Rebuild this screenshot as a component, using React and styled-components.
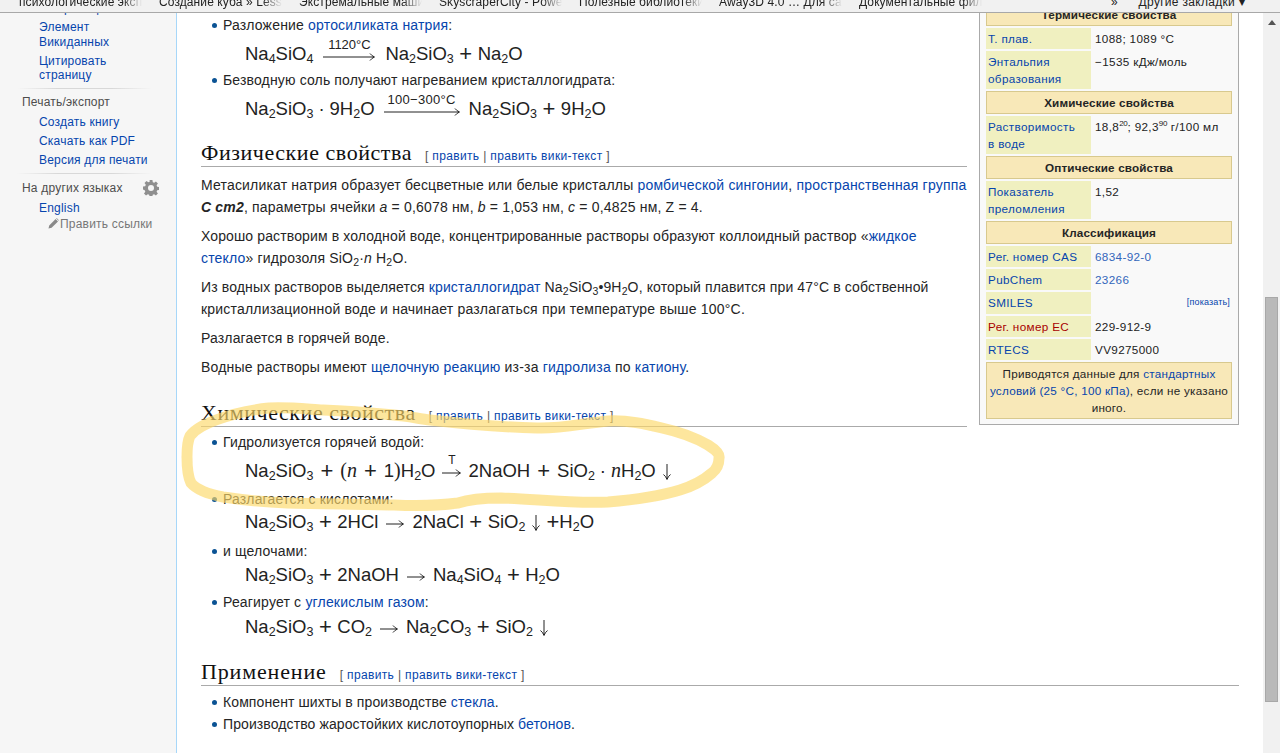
import React from 'react';
import styled, { createGlobalStyle } from 'styled-components';

const Global = createGlobalStyle`
  html, body { margin: 0; height: 100%; overflow: hidden; background: #fff; }
  #root { height: 100%; }
  * { box-sizing: border-box; }
  a { text-decoration: none; }
`;
const Page = styled.div`
  width: 1280px; height: 753px; position: relative; overflow: hidden; display: flex; flex-direction: column;
  font-family: "Liberation Sans", Arial, sans-serif; color: #252525;
`;
const BookmarkBar = styled.div`
  height: 13px; flex: none; background: #f1f1f1; border-bottom: 1px solid #a8a8a8; overflow: hidden;
  display: flex; align-items: flex-end; padding-left: 19px; font-size: 12px; letter-spacing: .1px; color: #222;
  position: relative; line-height: 12px;
`;
const Bookmark = styled.div`
  width: 140px; flex: none; white-space: nowrap; overflow: hidden; padding: 0 16px 4px 0; height: 20px; display: flex; align-items: flex-end;
  -webkit-mask-image: linear-gradient(90deg, #000 74%, transparent 88%);
  mask-image: linear-gradient(90deg, #000 74%, transparent 88%);
`;
const OtherBookmarks = styled.div` position: absolute; right: 35px; bottom: 4px; white-space: nowrap; letter-spacing: .3px; `;
const Chevron = styled.span` position: absolute; left: 1111px; bottom: 4px; font-size: 12px; `;
const Body = styled.div` flex: 1; display: flex; min-height: 0; `;
const Sidebar = styled.nav`
  width: 177px; flex: none; background: #f6f6f6; border-right: 1px solid #a7d7f9; overflow: hidden; font-size: 12px; line-height: 14.5px;
  letter-spacing: .2px;
`;
const NavInner = styled.div` margin-top: -12px; padding-left: 22px; `;
const NavList = styled.div` padding-left: 17px; display: flex; flex-direction: column; gap: 4.5px; `;
const NavLink = styled.a` color: #0645ad; display: block; `;
const Divider = styled.div`
  height: 1px; width: 135px; margin: ${p => p.$top}px 0 6px -5px;
  background: linear-gradient(90deg, #f6f6f6, #d8d8d8 30%, #d8d8d8 70%, #f6f6f6);
`;
const NavHead = styled.div`
  color: #4d4d4d; display: flex; align-items: center; justify-content: space-between; width: 137px; margin-bottom: ${p => p.$mb}px; height: 16px;
`;
const EditLinks = styled.div` color: #777; display: flex; align-items: center; gap: 1px; margin: 1px 0 0 26px; white-space: nowrap; `;
const Main = styled.main`
  flex: 1; min-width: 0; overflow: hidden; font-size: 14px; line-height: 22px; letter-spacing: .18px; padding: 0 24px; position: relative;
  a { color: #0645ad; }
`;
const Infobox = styled.aside`
  float: right; width: 260px; margin: -11px 0 12px 12px; border: 1px solid #aaa; background: #f9f9f9; padding: 0 6px 5px 6px;
  font-size: 11.7px; line-height: 17px; letter-spacing: .35px; display: flex; flex-direction: column; gap: 2px;
`;
const BoxHead = styled.div`
  background: #f8e8b8; border: 1px solid #d8c98e; height: 23px; display: flex; align-items: center; justify-content: center;
  font-weight: 700; color: #252525; text-align: center; letter-spacing: .15px;
`;
const BoxRow = styled.div` display: flex; min-height: ${p => p.$h || 21}px; `;
const BoxKey = styled.div`
  width: 105px; flex: none; background: #f0f0c0; padding: 2px 2px 2px; color: ${p => p.$red ? '#a80000' : '#0645ad'}; line-height: 17px;
`;
const BoxVal = styled.div`
  flex: 1; padding: 2px 4px; color: #222; line-height: 17px; position: relative;
  a { color: #3366bb; }
  sup { font-size: 8px; line-height: 0; letter-spacing: -.3px; }
`;
const Show = styled.a`
  && { color: #0645ad; } position: absolute; right: 2px; top: 2px; font-size: 9px; letter-spacing: .15px;
`;
const BoxNote = styled.div`
  background: #f8e8b8; border: 1px solid #d8c98e; text-align: center; padding: 2px 0; letter-spacing: .25px; white-space: nowrap;
`;
const Bullets = styled.ul` list-style: none; margin: 0; padding: 0 0 0 22px; `;
const Bullet = styled.li`
  position: relative; height: 22px; margin-top: ${p => p.$mt ?? 0}px; letter-spacing: ${p => p.$ls ?? .18}px;
  &::before { content: ''; position: absolute; left: -11px; top: 9px; width: 5px; height: 5px; border-radius: 50%; background: #0b5394; }
`;
const FormulaLine = styled.div`
  margin-left: 44px; font-size: 18.5px; letter-spacing: 0; white-space: nowrap; color: #222;
  height: ${p => p.$h}px; line-height: ${p => p.$h - (p.$pt || 0) - (p.$pb || 0)}px; padding-top: ${p => p.$pt || 0}px;
  sub { font-size: 12.5px; line-height: 0; vertical-align: -3px; }
`;
const MathItalic = styled.span` font-family: "Liberation Serif", serif; font-style: italic; font-size: 20px; `;
const Paren = styled.span` font-family: "Liberation Serif", serif; font-size: 20px; `;
const Op = styled.span` margin: 0 ${p => p.$m ?? 7}px; `;
const Plus = styled.span` font-size: 22px; line-height: 0; margin: 0 ${p => p.$m ?? 5.5}px; vertical-align: -1px; `;
const Arrow = styled.span`
  display: inline-block; position: relative; width: ${p => p.$w}px; height: 10px; margin: 0 ${p => p.$m ?? 8}px; vertical-align: ${p => p.$va ?? -1}px;
  svg { display: block; }
`;
const ArrowLabel = styled.span`
  position: absolute; bottom: ${p => p.$b ?? 10}px; left: -10px; right: -10px; text-align: center; font-size: ${p => p.$fs ?? 13}px; letter-spacing: ${p => p.$ls ?? 0}px; line-height: 15px; white-space: nowrap;
`;
const DownArrow = styled.svg` margin: 0 ${p => p.$mr ?? 0}px 0 6px; vertical-align: -3px; `;
const H2 = styled.h2`
  font-family: "Liberation Serif", serif; font-weight: 400; font-size: 22px; line-height: 27px; letter-spacing: ${p => p.$ls ?? .55}px; margin: ${p => p.$mt}px 0 ${p => p.$mb}px; color: #111;
  border-bottom: 1px solid #aaa; white-space: nowrap; overflow: hidden; height: 28px;
`;
const EditSection = styled.span`
  font-family: "Liberation Sans", sans-serif; font-size: 12px; letter-spacing: .35px; color: #555; margin-left: 13px;
`;
const P = styled.p`
  margin: 0 0 7px; white-space: nowrap;
  sub { font-size: 10.5px; line-height: 0; vertical-align: -3px; }
`;
const Line = styled.span` display: block; letter-spacing: ${p => p.$ls}px; `;
const Ring = styled.svg` position: absolute; left: 0; top: 0; width: 1280px; height: 753px; pointer-events: none; opacity: .65; `;
const Scrollbar = styled.div` width: 17px; flex: none; background: #f1f1f1; position: relative; `;
const Thumb = styled.div` position: absolute; left: 2px; right: 2px; top: 284px; height: 405px; background: #b9b9b9; border: 1px solid #a8a8a8; `;
const ScrollUp = styled.div`
  position: absolute; left: 4.5px; top: 7px; width: 0; height: 0; border-left: 4px solid transparent; border-right: 4px solid transparent; border-bottom: 5px solid #555;
`;

const Gear = () => (
  <svg width="16" height="16" viewBox="0 0 16 16" fill="#8f8f8f"><path fillRule="evenodd" d="M6.6 0h2.8l.4 2.2 1.4.6L12.9 1.5l2 2-1.3 1.8.6 1.4 2.2.4v2.8l-2.2.4-.6 1.4 1.3 1.8-2 2-1.8-1.3-1.4.6-.4 2.2H6.6l-.4-2.2-1.4-.6-1.8 1.3-2-2 1.3-1.8-.6-1.4L0 9.4V6.6l2.2-.4.6-1.4L1.5 3l2-2 1.8 1.3 1.4-.6zM8 5a3 3 0 100 6 3 3 0 000-6z" /></svg>
);
const Pencil = () => (
  <svg width="11" height="11" viewBox="0 0 11 11" fill="#8a8a8a"><path d="M0.5 10.5l.7-3L7.6 1l2.4 2.4L3.6 9.8zM8.2.4l.5-.3 2.2 2.2-.3.5z" /></svg>
);
const LongArrow = ({ w }) => (
  <svg width={w} height="10" viewBox={`0 0 ${w} 10`} fill="none" stroke="#222" strokeWidth="1">
    <path d={`M0 5H${w - 1}M${w - 5} 1.5Q${w - 3} 4 ${w - 0.5} 5Q${w - 3} 6 ${w - 5} 8.5`} />
  </svg>
);
const Down = ({ mr }) => (
  <DownArrow $mr={mr} width="10" height="16" viewBox="0 0 10 16" fill="none" stroke="#222" strokeWidth="1">
    <path d="M5 0V15M1.5 10.5Q4 12.5 5 15.5Q6 12.5 8.5 10.5" />
  </DownArrow>
);
const Silicate = ({ a = 2, b = 3 }) => <>Na<sub>{a}</sub>SiO<sub>{b}</sub></>;
const Edit = () => <EditSection>[ <a>править</a> | <a>править вики-текст</a> ]</EditSection>;

export default function App() {
  return (
    <Page>
      <Global />
      <BookmarkBar>
        <Bookmark>психологические экспертизы</Bookmark>
        <Bookmark>Создание куба » Lessons</Bookmark>
        <Bookmark>Экстремальные машины</Bookmark>
        <Bookmark>SkyscraperCity - Power</Bookmark>
        <Bookmark>Полезные библиотеки</Bookmark>
        <Bookmark>Away3D 4.0 … Для сайта</Bookmark>
        <Bookmark>Документальные фильмы</Bookmark>
        <Chevron>»</Chevron>
        <OtherBookmarks>Другие закладки ▾</OtherBookmarks>
      </BookmarkBar>
      <Body>
        <Sidebar>
          <NavInner>
            <NavList>
              <NavLink>О странице</NavLink>
              <NavLink>Элемент<br />Викиданных</NavLink>
              <NavLink>Цитировать<br />страницу</NavLink>
            </NavList>
            <Divider $top={5} />
            <NavHead $mb={4}>Печать/экспорт</NavHead>
            <NavList>
              <NavLink>Создать книгу</NavLink>
              <NavLink>Скачать как PDF</NavLink>
              <NavLink>Версия для печати</NavLink>
            </NavList>
            <Divider $top={6} />
            <NavHead $mb={5}>На других языках <Gear /></NavHead>
            <NavList>
              <NavLink>English</NavLink>
            </NavList>
            <EditLinks><Pencil />Править ссылки</EditLinks>
          </NavInner>
        </Sidebar>
        <Main>
          <Infobox>
            <BoxHead>Термические свойства</BoxHead>
            <BoxRow><BoxKey>Т. плав.</BoxKey><BoxVal>1088; 1089 °C</BoxVal></BoxRow>
            <BoxRow><BoxKey>Энтальпия образования</BoxKey><BoxVal>−1535 кДж/моль</BoxVal></BoxRow>
            <BoxHead>Химические свойства</BoxHead>
            <BoxRow><BoxKey>Растворимость<br />в воде</BoxKey><BoxVal>18,8<sup>20</sup>; 92,3<sup>90</sup> г/100 мл</BoxVal></BoxRow>
            <BoxHead>Оптические свойства</BoxHead>
            <BoxRow><BoxKey>Показатель преломления</BoxKey><BoxVal>1,52</BoxVal></BoxRow>
            <BoxHead>Классификация</BoxHead>
            <BoxRow><BoxKey>Рег. номер CAS</BoxKey><BoxVal><a>6834-92-0</a></BoxVal></BoxRow>
            <BoxRow><BoxKey>PubChem</BoxKey><BoxVal><a>23266</a></BoxVal></BoxRow>
            <BoxRow $h={22}><BoxKey>SMILES</BoxKey><BoxVal><Show>[показать]</Show></BoxVal></BoxRow>
            <BoxRow><BoxKey $red>Рег. номер EC</BoxKey><BoxVal>229-912-9</BoxVal></BoxRow>
            <BoxRow><BoxKey>RTECS</BoxKey><BoxVal>VV9275000</BoxVal></BoxRow>
            <BoxNote>Приводятся данные для <a>стандартных</a><br /><a>условий (25 °C, 100 кПа)</a>, если не указано<br />иного.</BoxNote>
          </Infobox>

          <Bullets>
            <Bullet $mt={1}>Разложение <a>ортосиликата натрия</a>:</Bullet>
          </Bullets>
          <FormulaLine $h={33} $pt={3}>
            <Silicate a={4} b={4} />
            <Arrow $w={52} $m={10} $va={-2}><ArrowLabel>1120°C</ArrowLabel><LongArrow w={52} /></Arrow>
            <Silicate /><Plus>+</Plus>Na<sub>2</sub>O
          </FormulaLine>
          <Bullets>
            <Bullet $ls={.15}>Безводную соль получают нагреванием кристаллогидрата:</Bullet>
          </Bullets>
          <FormulaLine $h={34} $pt={2}>
            <Silicate /><Op $m={5}>·</Op>9H<sub>2</sub>O
            <Arrow $w={76} $m={9} $va={-2}><ArrowLabel $ls={.3}>100−300°C</ArrowLabel><LongArrow w={76} /></Arrow>
            <Silicate /><Plus>+</Plus>9H<sub>2</sub>O
          </FormulaLine>

          <H2 $mt={14} $mb={7}>Физические свойства<Edit /></H2>
          <P>Метасиликат натрия образует бесцветные или белые кристаллы <a>ромбической сингонии</a>, <a>пространственная группа</a><br /><b><i>C cm2</i></b>, параметры ячейки <i>a</i> = 0,6078 нм, <i>b</i> = 1,053 нм, <i>c</i> = 0,4825 нм, Z = 4.</P>
          <P><Line $ls={.12}>Хорошо растворим в холодной воде, концентрированные растворы образуют коллоидный раствор «<a>жидкое</a></Line><a>стекло</a>» гидрозоля SiO<sub>2</sub>·<i>n</i> H<sub>2</sub>O.</P>
          <P><Line $ls={.13}>Из водных растворов выделяется <a>кристаллогидрат</a> Na<sub>2</sub>SiO<sub>3</sub>•9H<sub>2</sub>O, который плавится при 47°C в собственной</Line><Line $ls={.2}>кристаллизационной воде и начинает разлагаться при температуре выше 100°C.</Line></P>
          <P>Разлагается в горячей воде.</P>
          <P>Водные растворы имеют <a>щелочную реакцию</a> из-за <a>гидролиза</a> по <a>катиону</a>.</P>

          <H2 $mt={21} $mb={4}>Химические свойства<Edit /></H2>
          <Bullets>
            <Bullet>Гидролизуется горячей водой:</Bullet>
          </Bullets>
          <FormulaLine $h={35}>
            <Silicate /><Plus $m={7}>+</Plus><Paren>(</Paren><MathItalic>n</MathItalic><Plus $m={7}>+</Plus>1<Paren>)</Paren>H<sub>2</sub>O
            <Arrow $w={19} $m={7}><ArrowLabel $fs={12}>T</ArrowLabel><LongArrow w={19} /></Arrow>
            2NaOH<Plus $m={7}>+</Plus>SiO<sub>2</sub><Op $m={5}>·</Op><MathItalic>n</MathItalic>H<sub>2</sub>O<Down />
          </FormulaLine>
          <Bullets>
            <Bullet>Разлагается с кислотами:</Bullet>
          </Bullets>
          <FormulaLine $h={30} $pb={6}>
            <Silicate /><Plus>+</Plus>2HCl
            <Arrow $w={18}><LongArrow w={18} /></Arrow>
            2NaCl<Plus>+</Plus>SiO<sub>2</sub><Down mr={5} /><Plus $m={0}>+</Plus>H<sub>2</sub>O
          </FormulaLine>
          <Bullets>
            <Bullet>и щелочами:</Bullet>
          </Bullets>
          <FormulaLine $h={29} $pb={3}>
            <Silicate /><Plus>+</Plus>2NaOH
            <Arrow $w={18}><LongArrow w={18} /></Arrow>
            <Silicate a={4} b={4} /><Plus>+</Plus>H<sub>2</sub>O
          </FormulaLine>
          <Bullets>
            <Bullet>Реагирует с <a>углекислым газом</a>:</Bullet>
          </Bullets>
          <FormulaLine $h={27}>
            <Silicate /><Plus>+</Plus>CO<sub>2</sub>
            <Arrow $w={18}><LongArrow w={18} /></Arrow>
            Na<sub>2</sub>CO<sub>3</sub><Plus>+</Plus>SiO<sub>2</sub><Down />
          </FormulaLine>

          <H2 $mt={18} $mb={5} $ls={.85}>Применение<Edit /></H2>
          <Bullets>
            <Bullet $ls={.1}>Компонент шихты в производстве <a>стекла</a>.</Bullet>
            <Bullet $ls={.1}>Производство жаростойких кислотоупорных <a>бетонов</a>.</Bullet>
          </Bullets>
        </Main>
        <Scrollbar>
          <ScrollUp />
          <Thumb />
        </Scrollbar>
      </Body>
      <Ring viewBox="0 0 1280 753">
        <path d="M190 436C196 428 206 424 216 420C232 414 250 410 269 408C288 407 306 409 323 410C348 411 372 413 394 415C408 416 420 419 430 420C465 424 500 427 537 428C560 429 585 423 608 421C628 420 645 424 662 428C680 432 696 438 708 445C716 450 720 454 719 458C719 464 717 469 712 473C704 480 693 486 680 490C660 496 632 500 608 502C575 504 535 499 501 498C485 498 470 499 458 503C435 506 415 506 394 505C360 504 322 504 287 503C265 502 243 500 223 497C208 494 197 490 191 483C187 475 187 465 187 457C187 449 187 442 190 436Z" fill="none" stroke="#fdd96a" strokeWidth="11" strokeLinejoin="round" />
      </Ring>
    </Page>
  );
}
